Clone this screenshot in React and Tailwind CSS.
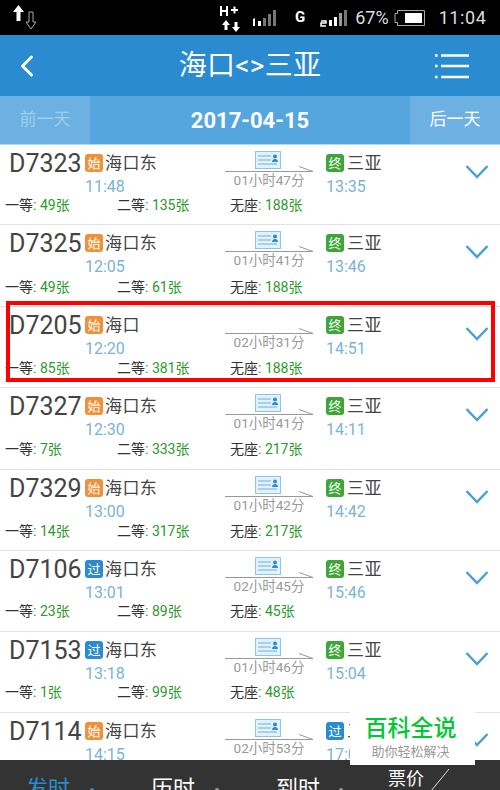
import { ChevronLeft } from 'lucide-react';

const rows = [
  { no: 'D7323', startTag: '始', from: '海口东', dep: '11:48', dur: '01小时47分', endTag: '终', arr: '13:35', a: '49', b: '135', c: '188', h: 'h-[80px]', top: 'h-[51px]' },
  { no: 'D7325', startTag: '始', from: '海口东', dep: '12:05', dur: '01小时41分', endTag: '终', arr: '13:46', a: '49', b: '61', c: '188', h: 'h-[82px]', top: 'h-[53px]' },
  { no: 'D7205', startTag: '始', from: '海口', dep: '12:20', dur: '02小时31分', endTag: '终', arr: '14:51', a: '85', b: '381', c: '188', h: 'h-[81px]', top: 'h-[52px]', noCard: true },
  { no: 'D7327', startTag: '始', from: '海口东', dep: '12:30', dur: '01小时41分', endTag: '终', arr: '14:11', a: '7', b: '333', c: '217', h: 'h-[82px]', top: 'h-[52px]' },
  { no: 'D7329', startTag: '始', from: '海口东', dep: '13:00', dur: '01小时42分', endTag: '终', arr: '14:42', a: '14', b: '317', c: '217', h: 'h-[81px]', top: 'h-[52px]' },
  { no: 'D7106', startTag: '过', from: '海口东', dep: '13:01', dur: '02小时45分', endTag: '终', arr: '15:46', a: '23', b: '89', c: '45', h: 'h-[81px]', top: 'h-[51px]' },
  { no: 'D7153', startTag: '过', from: '海口东', dep: '13:18', dur: '01小时46分', endTag: '终', arr: '15:04', a: '1', b: '99', c: '48', h: 'h-[81px]', top: 'h-[51px]' },
  { no: 'D7114', startTag: '始', from: '海口东', dep: '14:15', dur: '02小时53分', endTag: '过', arr: '17:08', a: '', b: '', c: '', h: 'h-[81px]', top: 'h-[51px]' },
];

const tagColors = {
  始: 'bg-[#f0913a]',
  终: 'bg-[#3da637]',
  过: 'bg-[#2a8bd0]',
};

const Tag = ({ label }) => (
  <span className={`flex items-center justify-center w-[18px] h-[18px] rounded-[3px] text-[13px] leading-none text-white ${tagColors[label]}`}>
    {label}
  </span>
);

const Ticket = ({ label, count, className }) => (
  <span className={`text-[14px] leading-[18px] whitespace-nowrap ${className}`}>
    <span className="text-[#333]">{label}</span>
    <span className="text-[#2b9a2b]">: {count}张</span>
  </span>
);

const CardIcon = () => (
  <svg width="26" height="18" viewBox="0 0 26 18" className="block -ml-[2px]">
    <rect x="0.5" y="0.5" width="25" height="17" fill="#e3f1fb" stroke="#8cc4ec" />
    <path d="M3 5h13M3 9h13M3 13h19" stroke="#6db1e2" strokeWidth="1" />
    <circle cx="20" cy="5.500" r="2" fill="#2a8bd0" />
    <path d="M17 11c0-2 1.500-3 3-3s3 1 3 3z" fill="#2a8bd0" />
  </svg>
);

const Row = ({ row }) => (
  <div className={`flex flex-col shrink-0 border-b border-[#e2e2e2] bg-white ${row.h}`}>
    <div className={`flex ${row.top}`}>
      <div className="w-[85px] pl-[9px] pt-[3px] text-[25px] leading-[32px] text-[#444]">{row.no}</div>
      <div className="w-[140px] pt-[9px]">
        <div className="flex items-center gap-[2px] h-[18px]">
          <Tag label={row.startTag} />
          <span className="text-[17px] leading-none text-[#444] tracking-[0.4px]">{row.from}</span>
        </div>
        <div className="pt-[5px] text-[16px] leading-[20px] text-[#7ab3d8]">{row.dep}</div>
      </div>
      <div className="flex flex-col items-center w-[88px] pt-[6px]">
        <div className="h-[18px]">{!row.noCard && <CardIcon />}</div>
        <svg width="88" height="6" viewBox="0 0 88 6" className="block -mt-[3px]">
          <path d="M0 5.500h88L74 0.500" fill="none" stroke="#999" strokeWidth="1" />
        </svg>
        <div className="text-[13.5px] leading-[16px] text-[#999] whitespace-nowrap">{row.dur}</div>
      </div>
      <div className="w-[127px] pl-[13px] pt-[9px]">
        <div className="flex items-center gap-[3px] h-[18px]">
          <Tag label={row.endTag} />
          <span className="text-[17px] leading-none text-[#444] tracking-[0.4px]">三亚</span>
        </div>
        <div className="pt-[5px] text-[16px] leading-[20px] text-[#7ab3d8]">{row.arr}</div>
      </div>
      <div className="pl-[25px] pt-[19px]">
        <svg width="24" height="16" viewBox="0 0 24 16" className="block">
          <path d="M1.500 2L12 13L22.500 2" fill="none" stroke="#4a9fd8" strokeWidth="2.500" />
        </svg>
      </div>
    </div>
    {row.a && (
      <div className="flex pl-[5px]">
        <Ticket label="一等" count={row.a} className="w-[112px]" />
        <Ticket label="二等" count={row.b} className="w-[113px]" />
        <Ticket label="无座" count={row.c} />
      </div>
    )}
  </div>
);

const App = () => {
  return (
    <div className="relative flex flex-col w-[500px] h-[790px] overflow-hidden bg-white font-['Roboto','Noto_Sans_CJK_SC',sans-serif]">
      {/* status bar */}
      <div className="flex items-center h-[35px] shrink-0 bg-black text-[#ddd]">
        <svg width="26" height="28" viewBox="0 0 26 28" className="ml-[12px]">
          <path d="M6.500 1l-5.500 7h3.500v9h4v-9h3.500z" fill="#fff" />
          <path d="M17 8h4v10h3l-5 7-5-7h3z" fill="none" stroke="#aaa" strokeWidth="1" />
        </svg>
        <svg width="22" height="30" viewBox="0 0 22 30" className="ml-[182px]">
          <path d="M1 3v10M7 3v10M1 8h6" stroke="#fff" strokeWidth="2" fill="none" />
          <path d="M11 7h7M14.500 3.500v7" stroke="#fff" strokeWidth="2" fill="none" />
          <path d="M6 17l-4 5h2.500v5h3v-5H10zM16 29l4-5h-2.500v-5h-3v5H12z" fill="#fff" />
        </svg>
        <svg width="28" height="18" viewBox="0 0 28 18" className="ml-[10px]">
          <path d="M1 10l2-1v8H1z" fill="#fff" />
          <rect x="6" y="12" width="3" height="5" fill="#fff" />
          <rect x="11" y="9" width="3" height="8" fill="#777" />
          <rect x="16" y="5" width="3" height="12" fill="#777" />
          <rect x="21" y="1" width="3" height="16" fill="#777" />
        </svg>
        <span className="ml-[15px] text-[15px] font-bold leading-none text-white">G</span>
        <svg width="28" height="18" viewBox="0 0 28 18" className="ml-[15px]">
          <path d="M1 12h5v2H1v3h5" fill="none" stroke="#fff" strokeWidth="1.500" />
          <rect x="9" y="11" width="3" height="6" fill="#fff" />
          <rect x="14" y="8" width="3" height="9" fill="#fff" />
          <rect x="19" y="4" width="3" height="13" fill="#999" />
          <rect x="24" y="1" width="3" height="16" fill="#777" />
        </svg>
        <span className="ml-[7px] text-[18px] leading-none">67%</span>
        <svg width="32" height="18" viewBox="0 0 32 18" className="ml-[5px]">
          <path d="M3.500 1.500h27v15h-27v-3h-2.500v-9h2.500z" fill="none" stroke="#aaa" strokeWidth="1" />
          <rect x="11" y="4" width="17" height="10" fill="#fff" />
        </svg>
        <span className="ml-[13px] text-[18px] leading-none tracking-[0.6px]">11:04</span>
      </div>

      {/* title bar */}
      <div className="flex items-center h-[61px] shrink-0 bg-[#2a8bd0] text-white">
        <ChevronLeft size={36} strokeWidth={2} className="ml-[9px]" />
        <div className="flex-1 text-center text-[28px] leading-none tracking-[0.3px] pl-[20px]">海口&lt;&gt;三亚</div>
        <svg width="34" height="26" viewBox="0 0 34 26" className="mr-[31px]">
          <path d="M6 2.500h28M6 13h28M6 24h28" stroke="#fff" strokeWidth="2.500" />
          <path d="M0 2.500h2.500M0 13h2.500M0 24h2.500" stroke="#fff" strokeWidth="2.500" />
        </svg>
      </div>

      {/* day switch */}
      <div className="flex h-[49px] shrink-0 border-b border-[#b5d6ef] bg-[#55a6df] text-center">
        <div className="flex items-center justify-center w-[90px] bg-[#6db1e2] text-[#9fcdec] text-[17px]">前一天</div>
        <div className="flex-1 flex items-center justify-center text-white text-[22px] font-bold">2017-04-15</div>
        <div className="flex items-center justify-center w-[90px] bg-[#6db1e2] text-white text-[17px]">后一天</div>
      </div>

      {/* train list */}
      <div className="flex-1 flex flex-col overflow-hidden">
        {rows.map((row) => (
          <Row key={row.no} row={row} />
        ))}
      </div>

      {/* sort bar */}
      <div className="flex items-start h-[30px] shrink-0 overflow-hidden bg-[#333] text-white">
        <span className="ml-[26px] mt-[18px] text-[22px] leading-none text-[#2a8bd0]">发时</span>
        <span className="ml-[20px] mt-[28px] w-[4px] h-[4px] rounded-full bg-[#2a8bd0]" />
        <span className="ml-[57px] mt-[18px] text-[22px] leading-none">历时</span>
        <span className="ml-[20px] mt-[28px] w-[4px] h-[4px] rounded-full bg-[#999]" />
        <span className="ml-[57px] mt-[18px] text-[22px] leading-none">到时</span>
        <span className="ml-[19px] mt-[28px] w-[4px] h-[4px] rounded-full bg-[#999]" />
        <span className="ml-[45px] mt-[10px] text-[18px] leading-none">票价</span>
        <svg width="20" height="24" viewBox="0 0 20 24" className="ml-[6px] mt-[8px]">
          <path d="M1 23L19 1" stroke="#ddd" strokeWidth="1" fill="none" />
        </svg>
      </div>

      {/* picture overlays */}
      <div className="absolute left-[6px] top-[301px] w-[489px] h-[81px] border-[4px] border-[#f00]" />
      <div className="absolute left-[350px] top-[710px] flex flex-col items-center w-[125px] h-[55px] bg-white">
        <div className="pt-[6px] pr-[4px] text-[23px] leading-[26px] font-medium text-[#00c832]">百科全说</div>
        <div className="pt-[2px] pr-[4px] text-[13px] leading-[16px] text-[#999]">助你轻松解决</div>
      </div>
    </div>
  );
};

export default App;
